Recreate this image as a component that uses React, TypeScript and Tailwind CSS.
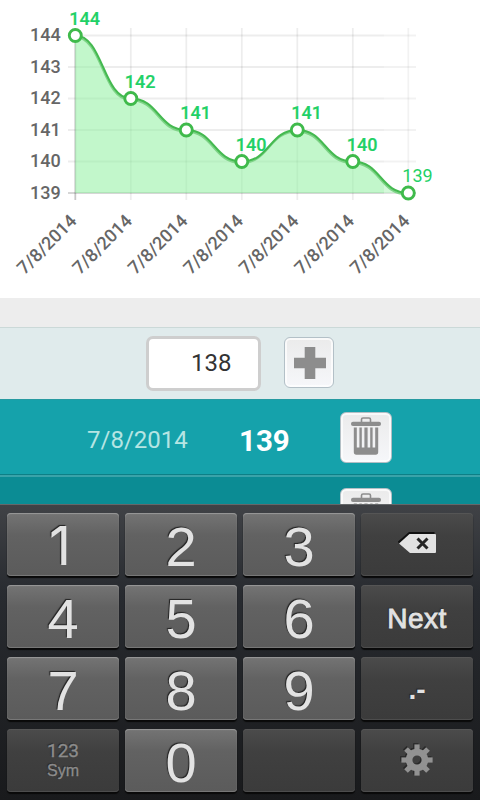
import React, { useState } from 'react';

const POINTS = [
  { date: '7/8/2014', value: 144 },
  { date: '7/8/2014', value: 142 },
  { date: '7/8/2014', value: 141 },
  { date: '7/8/2014', value: 140 },
  { date: '7/8/2014', value: 141 },
  { date: '7/8/2014', value: 140 },
  { date: '7/8/2014', value: 139 },
];
const TICKS = [144, 143, 142, 141, 140, 139];

const LEFT = 75.3;
const STEP = 55.5;
const BOTTOM = 193;

const xAt = (i: number) => LEFT + i * STEP;
const yAt = (v: number) => BOTTOM - (v - 139) * 31.5;

function WeightChart() {
  // horizontal tangents at each point
  const line = POINTS.map((p, i) => {
    const x = xAt(i);
    const y = yAt(p.value);
    if (i === 0) return `M${x} ${y}`;
    const mid = x - STEP / 2;
    return `C${mid} ${yAt(POINTS[i - 1].value)} ${mid} ${y} ${x} ${y}`;
  }).join(' ');

  return (
    <svg width="480" height="298" className="block font-['Roboto',sans-serif]">
      {TICKS.map(t => (
        <g key={t}>
          <line x1="68" x2="416" y1={yAt(t)} y2={yAt(t)} stroke="#000" strokeOpacity={t === 139 ? 0.16 : 0.07} strokeWidth="1.8" />
          <text x="60.8" y={yAt(t) + 5.9} textAnchor="end" fontSize="18" fontWeight="500" fill="#666">{t}</text>
        </g>
      ))}
      {POINTS.map((p, i) => (
        <line key={i} x1={xAt(i)} x2={xAt(i)} y1="28" y2="200" stroke="#000" strokeOpacity={i === 0 ? 0.22 : 0.07} strokeWidth="1.8" />
      ))}
      <path d={`${line} L${xAt(6)} ${BOTTOM} L${LEFT} ${BOTTOM} Z`} fill="#8ff0a0" fillOpacity="0.55" />
      <rect x="384" y="20" width="40" height="182" fill="#fff" fillOpacity="0.3" />
      <path d={line} fill="none" stroke="#7fd488" strokeWidth="2" transform="translate(-0.6 1.6)" />
      <path d={line} fill="none" stroke="#44b950" strokeWidth="2" />
      {POINTS.map((p, i) => (
        <g key={i}>
          <text
            x={xAt(i) - 6}
            y={yAt(p.value) - 10.8}
            fontSize="18"
            fontWeight={i === 6 ? 400 : 500}
            fill="#1fd166"
            stroke="#1fd166"
            strokeWidth={i === 6 ? 0 : 0.2}
          >
            {p.value}
          </text>
          <circle cx={xAt(i)} cy={yAt(p.value)} r="6" fill="#fff" stroke="#3fba4b" strokeWidth="2.9" />
          <text
            textAnchor="end"
            fontSize="18"
            fontWeight="500"
            fill="#666"
            transform={`translate(${xAt(i) + 2.5} 222) rotate(-45)`}
          >
            {p.date}
          </text>
        </g>
      ))}
    </svg>
  );
}

function PlusIcon() {
  return (
    <svg width="32" height="32" viewBox="0 0 32 32">
      <path d="M10.7 0H21.3V10.7H32V21.3H21.3V32H10.7V21.3H0V10.7H10.7Z" fill="#8d8d8d" />
    </svg>
  );
}

function TrashIcon() {
  return (
    <svg width="30" height="38" viewBox="0 0 30 38" fill="#8d8d8d">
      <path d="M10.5 5V2.5Q10.5 1 12 1H18Q19.5 1 19.5 2.5V5" fill="none" stroke="#8d8d8d" strokeWidth="1.6" />
      <rect x="0" y="4.7" width="30" height="4.3" rx="2" />
      <path d="M2.8 10.5H5.8V30.5H8.4V10.5H10.8V30.5H13.4V10.5H16.6V30.5H19.2V10.5H21.6V30.5H24.2V10.5H27.2V35Q27.2 37.8 24.7 37.8H5.3Q2.8 37.8 2.8 35Z" />
    </svg>
  );
}

function BackspaceIcon() {
  return (
    <svg width="42" height="24" viewBox="0 0 42 24" className="relative -top-px left-px">
      <path d="M1 9.5L12 0H37.5V2L2 12Z" fill="#101010" />
      <path d="M2 11.5L12.5 2H38Q39 2 39 3V20Q39 21 38 21H13Z" fill="#e2e2e2" />
      <path d="M20.5 6.5L30.5 16.5M30.5 6.5L20.5 16.5" stroke="#262626" strokeWidth="3" />
    </svg>
  );
}

function GearIcon() {
  const teeth = [0, 45, 90, 135, 180, 225, 270, 315];
  const shape = (
    <>
      <circle r="7.9" fill="none" stroke="currentColor" strokeWidth="6.6" />
      {teeth.map(a => (
        <rect key={a} x="-2.6" y="-15.6" width="5.2" height="6" fill="currentColor" transform={`rotate(${a})`} />
      ))}
    </>
  );
  return (
    <svg width="36" height="36" viewBox="-18 -18 36 36" className="relative -top-px">
      <g className="text-[#282828]" transform="translate(-1.2 -1.2)">{shape}</g>
      <g className="text-[#929292]">{shape}</g>
    </svg>
  );
}

function DeleteButton() {
  return (
    <button className="flex h-[51px] w-[52px] shrink-0 justify-center rounded-[6px] border border-[#b3bfc5] bg-linear-to-b from-[#ebebeb] to-[#f6f7fa] pt-[4px] shadow-[inset_0_0_0_2px_rgba(255,255,255,0.7)]">
      <TrashIcon />
    </button>
  );
}

interface KeyProps {
  dark?: boolean;
  onClick?: () => void;
  children?: React.ReactNode;
}

function Key({ dark, onClick, children }: KeyProps) {
  return (
    <button
      onClick={onClick}
      className={`flex h-[63px] items-center justify-center rounded-[4px] text-[#e2e2e2] [text-shadow:-1px_-1px_1px_#222] ${
        dark
          ? 'bg-linear-to-b from-[#4b4b4b] via-[#404040] via-35% to-[#3b3b3b] shadow-[0_2px_1px_#090909,inset_0_1px_0_#555,inset_0_-1px_0_#4d4d4d]'
          : 'bg-linear-to-b from-[#747474] via-[#626262] via-35% to-[#5b5b5b] shadow-[0_2px_1px_#090909,inset_0_1px_1px_#999,inset_0_-1px_0_#777]'
      }`}
    >
      {children}
    </button>
  );
}

export default function App() {
  const [value, setValue] = useState('138');

  const digit = (d: string) => (
    <Key onClick={() => setValue(v => v + d)}>
      <span
        className={
          d === '1'
            ? "pt-[3px] pr-[6px] font-['Inter',sans-serif] text-[54px] leading-none"
            : 'pt-[4px] text-[56px] leading-none'
        }
      >
        {d}
      </span>
    </Key>
  );

  return (
    <div className="flex h-[800px] w-[480px] flex-col overflow-hidden bg-white font-['Roboto',sans-serif]">
      <WeightChart />
      <div className="h-[29px] shrink-0 bg-[#ededed]" />

      {/* New entry */}
      <div className="flex h-[72px] shrink-0 border-t border-[#cbd9d8] bg-[#e0ebec] pl-[146px] pt-[8px]">
        <input
          value={value}
          onChange={e => setValue(e.target.value)}
          className="h-[55px] w-[115px] rounded-[7px] border-[3px] border-[#cecece] bg-white pl-[42px] pb-[2px] text-2xl text-[#333] outline-none"
        />
        <button className="ml-[23px] mt-[1px] flex h-[51px] w-[50px] items-center justify-center rounded-[6px] border border-[#b3c0c7] bg-linear-to-b from-[#ebebeb] to-[#f6f7fa] pl-[2px] shadow-[inset_0_0_0_2px_rgba(255,255,255,0.7)]">
          <PlusIcon />
        </button>
      </div>

      {/* History */}
      <div className="flex h-[76px] shrink-0 border-b border-[#0d7f86] border-t border-t-[#279aa1] bg-[#15a2ab] pl-[87px] pt-[12px]">
        <span className="w-[152px] pt-[12px] text-2xl leading-8 text-[#b5e5e3]">7/8/2014</span>
        <span className="w-[101px] pt-[13px] text-[29.5px] leading-8 font-bold text-white">139</span>
        <DeleteButton />
      </div>
      <div className="flex h-[29px] shrink-0 overflow-hidden border-t-2 border-[#3aa3a9] bg-[#0b8c94] pl-[340px] pt-[11px]">
        <DeleteButton />
      </div>

      {/* Keypad */}
      <div className="grid h-[296px] shrink-0 grid-cols-[repeat(4,112px)] content-start gap-x-[6px] gap-y-[9px] border-t border-[#65686a] bg-linear-to-b from-[#404246] via-[#282b30] via-30% to-[#191a1c] pl-[7px] pt-[8px] font-['Liberation_Sans',sans-serif]">
        {digit('1')}
        {digit('2')}
        {digit('3')}
        <Key dark onClick={() => setValue(v => v.slice(0, -1))}>
          <BackspaceIcon />
        </Key>
        {digit('4')}
        {digit('5')}
        {digit('6')}
        <Key dark>
          <span className="pt-[4px] text-[28px] leading-none tracking-[0.5px] [-webkit-text-stroke:0.9px_#e2e2e2]">Next</span>
        </Key>
        {digit('7')}
        {digit('8')}
        {digit('9')}
        <Key dark>
          <span className="pt-[2px] text-[28px] leading-none font-bold">.-</span>
        </Key>
        <Key dark>
          <span className="flex flex-col text-[#8c8c8c] [text-shadow:-1px_-1px_1px_#2b2b2b] [-webkit-text-stroke:0.3px_#8c8c8c]">
            <span className="font-['Roboto',sans-serif] text-[19px] leading-[20px]">123</span>
            <span className="text-base leading-[20px]">Sym</span>
          </span>
        </Key>
        {digit('0')}
        <Key dark />
        <Key dark>
          <GearIcon />
        </Key>
      </div>
    </div>
  );
}
